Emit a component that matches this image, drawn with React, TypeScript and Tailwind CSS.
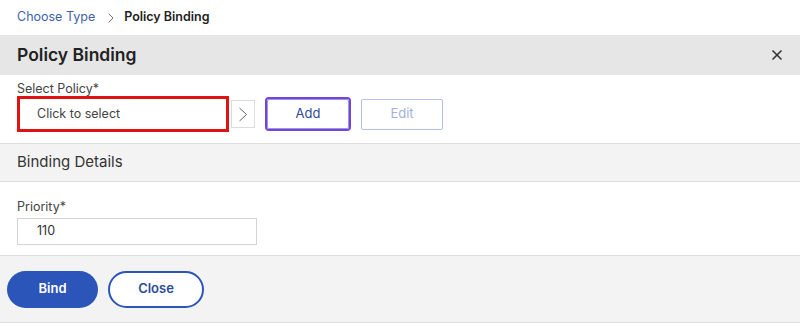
import { X, ChevronRight } from "lucide-react";

const App = () => {
  return (
    <div className="w-[800px] h-[328px] bg-white font-['Inter',sans-serif] text-[#222] overflow-hidden">
      <nav className="h-[35px] flex items-center pl-[17px] text-[12.5px]">
        <span className="text-[#3d62ad]">Choose Type</span>
        <ChevronRight className="w-[16px] h-[16px] ml-[8px] mr-[5px] text-[#555]" strokeWidth={1.25} />
        <span className="font-semibold text-[#222]">Policy Binding</span>
      </nav>

      <header className="h-[40px] bg-[#e6e6e6] flex items-center justify-between pl-[17px] pr-[15px]">
        <h1 className="text-[17.5px] font-semibold text-[#222]">Policy Binding</h1>
        <X className="w-[16px] h-[16px] text-[#333]" strokeWidth={2.5} />
      </header>

      <section className="pl-[17px] pt-[7px] h-[68px]">
        <div className="text-[12.5px] text-[#444] leading-[14px]">Select Policy*</div>
        <div className="flex items-center h-[36px]">
          <div className="w-[212px] h-[36px] border-[3px] border-[#e01212] flex items-center pl-[17px] text-[12.5px] text-[#444]">
            Click to select
          </div>
          <div className="ml-[2px] w-[24px] h-[28px] border border-[#dcdcdc] flex items-center justify-center">
            <svg width="10" height="15" viewBox="0 0 10 15" fill="none" stroke="#666" strokeWidth="1">
              <polyline points="1.5,1 8.5,7.5 1.5,14" />
            </svg>
          </div>
          <button className="ml-[10px] w-[86px] h-[34px] rounded-[4px] border-2 border-[#7b3fe0] p-0">
            <span className="flex items-center justify-center w-full h-full rounded-[2px] border border-[#8aa0d8] text-[13px] text-[#2d4a9a]">
              Add
            </span>
          </button>
          <button className="ml-[10px] w-[82px] h-[31px] rounded-[2px] border border-[#b3c1e6] text-[13px] text-[#a3b1dc]">
            Edit
          </button>
        </div>
      </section>

      <div className="h-[39px] bg-[#f3f3f3] border-y border-[#dddddd] flex items-center pl-[17px] text-[15px] text-[#333]">
        Binding Details
      </div>

      <section className="pl-[17px] pt-[18px] h-[73px]">
        <div className="text-[12.5px] text-[#444] leading-[14px]">Priority*</div>
        <div className="mt-[4px] w-[240px] h-[27px] border border-[#d4d4d4] flex items-center pl-[19px] text-[12.5px] text-[#333]">
          110
        </div>
      </section>

      <footer className="h-[68px] bg-[#f3f3f3] border-y border-[#dddddd] flex items-center pl-[7px] gap-[10px]">
        <button className="w-[91px] h-[37px] rounded-full bg-[#2b55b8] text-white text-[13px] font-semibold">
          Bind
        </button>
        <button className="w-[96px] h-[37px] rounded-full bg-white border-2 border-[#2b55b8] text-[#2b4a9a] text-[13px] font-semibold">
          Close
        </button>
      </footer>
    </div>
  );
};

export default App;
